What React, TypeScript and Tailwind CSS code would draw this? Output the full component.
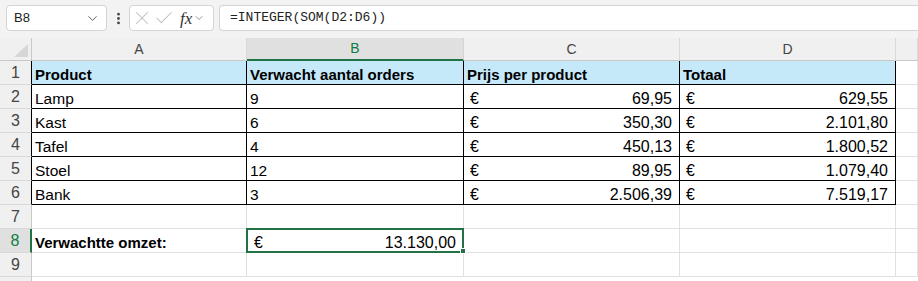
import { Check, ChevronDown, EllipsisVertical, X } from "lucide-react";

type Row = {
  n: number;
  a?: string;
  b?: string;
  c?: string;
  d?: string;
  bold?: boolean;
  table?: boolean;
};

const rows: Row[] = [
  { n: 1, a: "Product", b: "Verwacht aantal orders", c: "Prijs per product", d: "Totaal", bold: true, table: true },
  { n: 2, a: "Lamp", b: "9", c: "69,95", d: "629,55", table: true },
  { n: 3, a: "Kast", b: "6", c: "350,30", d: "2.101,80", table: true },
  { n: 4, a: "Tafel", b: "4", c: "450,13", d: "1.800,52", table: true },
  { n: 5, a: "Stoel", b: "12", c: "89,95", d: "1.079,40", table: true },
  { n: 6, a: "Bank", b: "3", c: "2.506,39", d: "7.519,17", table: true },
  { n: 7 },
  { n: 8, a: "Verwachtte omzet:", bold: true },
  { n: 9 },
];

function TextCell({ text, bold, table, head }: { text?: string; bold?: boolean; table?: boolean; head?: boolean }) {
  return (
    <div
      className={`h-[24px] flex items-end pl-[3px] border-r border-b text-[15.5px] leading-[18px] text-black overflow-hidden whitespace-nowrap ${
        table ? "border-black" : "border-[#e1e1e1]"
      } ${head ? "bg-[#c6e9fa]" : "bg-white"} ${bold ? "font-bold text-[15px]" : ""}`}
    >
      {text}
    </div>
  );
}

function MoneyCell({ value, table, head, bold }: { value?: string; table?: boolean; head?: boolean; bold?: boolean }) {
  if (head || !value) return <TextCell text={value} bold={bold} table={table} head={head} />;
  return (
    <div
      className={`h-[24px] flex items-end justify-between pl-[6px] pr-[7px] border-r border-b text-[16px] leading-[18px] text-black bg-white ${
        table ? "border-black" : "border-[#e1e1e1]"
      }`}
    >
      <span>€</span>
      <span>{value}</span>
    </div>
  );
}

function SelectedCell() {
  return (
    <div className="relative h-[24px] flex items-end justify-between pl-[7px] pr-[7px] border-r border-b border-[#e1e1e1] text-[16px] leading-[18px] text-black bg-white">
      <span>€</span>
      <span>13.130,00</span>
      <div className="absolute -left-[1px] -top-[1px] w-[218px] h-[25px] border-2 border-[#217346]" />
      <div className="absolute right-[-3px] bottom-[-2px] w-[6px] h-[6px] bg-[#217346] border border-white" />
    </div>
  );
}

export default function App() {
  return (
    <div className="w-[918px] h-[281px] overflow-hidden bg-white" style={{ fontFamily: '"Liberation Sans", Arial, sans-serif' }}>
      {/* formula bar */}
      <div className="h-[38px] bg-[#f3f3f3] flex items-start pt-[5px] pl-[6px]">
        <div className="w-[101px] h-[26px] bg-white border border-[#d4d4d4] rounded-[4px] flex items-center justify-between pl-[7px] pr-[6px]">
          <span className="text-[13px] text-[#222]">B8</span>
          <ChevronDown size={15} strokeWidth={1.5} className="text-[#555]" />
        </div>
        <div className="w-[22px] h-[26px] flex items-center justify-center">
          <EllipsisVertical size={15} strokeWidth={2.5} className="text-[#444]" />
        </div>
        <div className="w-[85px] h-[26px] bg-white border border-[#d4d4d4] rounded-[4px] flex items-center pl-[1px] gap-0">
          <X size={22} strokeWidth={1.1} className="text-[#bdbdbd]" />
          <Check size={22} strokeWidth={1.1} className="text-[#bdbdbd]" />
          <span className="ml-[5px] text-[17px] italic text-[#333] leading-none" style={{ fontFamily: '"Liberation Serif", serif' }}>
            fx
          </span>
          <ChevronDown size={12} strokeWidth={1.5} className="ml-[1px] text-[#777]" />
        </div>
        <div className="ml-[5px] flex-1 h-[26px] bg-white border border-r-0 border-[#d4d4d4] rounded-l-[4px] flex items-center pl-[10px]">
          <span className="text-[13px] text-[#222]" style={{ fontFamily: '"Liberation Mono", monospace' }}>
            =INTEGER(SOM(D2:D6))
          </span>
        </div>
      </div>

      {/* sheet */}
      <div className="grid grid-cols-[32px_215px_217px_216px_216px_22px]">
        <div className="relative h-[23px] bg-[#f0f0f0] border-r border-b border-[#c8c8c8]">
          <div className="absolute right-[3px] bottom-[3px] w-0 h-0 border-l-[14px] border-l-transparent border-b-[13px] border-b-[#d6d6d6]" />
        </div>
        {["A", "B", "C", "D", ""].map((l) => (
          <div
            key={l}
            className={`h-[23px] flex items-center justify-center text-[14px] border-r ${
              l === "B"
                ? "bg-[#e0e0e0] text-[#107c41] border-b-2 border-b-[#217346] border-r-[#d4d4d4]"
                : "bg-[#f0f0f0] text-[#444] border-b border-b-[#c8c8c8] border-r-[#d9d9d9]"
            }`}
          >
            {l}
          </div>
        ))}
        {rows.map((r) => (
          <Rowcells key={r.n} r={r} />
        ))}
        <div className="h-[24px] bg-[#f0f0f0] border-r border-[#c8c8c8]" />
        <div className="col-span-5 h-[24px] bg-white" />
      </div>
    </div>
  );
}

function Rowcells({ r }: { r: Row }) {
  const sel = r.n === 8;
  return (
    <>
      <div
        className={`h-[24px] flex items-center justify-center text-[16px] border-b border-b-[#d9d9d9] ${
          sel
            ? "bg-[#e0e0e0] text-[#107c41] border-r-2 border-r-[#217346]"
            : `bg-[#f0f0f0] text-[#444] border-r ${r.table ? "border-r-black" : "border-r-[#c8c8c8]"}`
        }`}
      >
        {r.n}
      </div>
      <TextCell text={r.a} bold={r.bold} table={r.table} head={r.n === 1} />
      {sel ? <SelectedCell /> : <TextCell text={r.b} bold={r.bold} table={r.table} head={r.n === 1} />}
      <MoneyCell value={r.c} table={r.table} head={r.n === 1} bold={r.bold} />
      <MoneyCell value={r.d} table={r.table} head={r.n === 1} bold={r.bold} />
      <div className="h-[24px] border-r border-b border-[#e1e1e1] bg-white" />
    </>
  );
}
